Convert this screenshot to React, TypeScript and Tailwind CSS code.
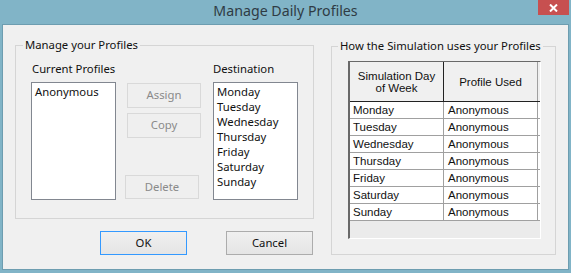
import React from 'react';

const days = ['Monday', 'Tuesday', 'Wednesday', 'Thursday', 'Friday', 'Saturday', 'Sunday'];

const ui = { fontFamily: '"Segoe UI", "Noto Sans", sans-serif' };
const grid = { fontFamily: 'Tahoma, "Liberation Sans", sans-serif' };

function DisabledButton({ label, className }: { label: string; className: string }) {
  return (
    <div
      className={`flex items-center justify-center w-[74px] border border-[#d9d9d9] bg-[#efefef] text-[11.3px] text-[#8a8a8a] ${className}`}
    >
      {label}
    </div>
  );
}

export default function App() {
  return (
    <div className="w-[571px] h-[273px] bg-[#81b4c7] flex flex-col text-[#111] whitespace-nowrap" style={ui}>
      {/* title bar */}
      <div className="relative h-[24px] flex items-center justify-center">
        <span className="text-[14.2px] text-[#2f3b44] leading-[20px] -mt-[2px]">Manage Daily Profiles</span>
        <div className="absolute right-[2px] top-0 w-[31px] h-[15px] bg-[#c75050] flex items-center justify-center">
          <svg width="9" height="8" viewBox="0 0 9 8">
            <path d="M1 0.5 L8 7.5 M8 0.5 L1 7.5" stroke="#fff" strokeWidth="2" />
          </svg>
        </div>
      </div>

      {/* client area */}
      <div className="mx-[2px] mb-[3px] flex-1 border border-[#6d9db0] bg-[#f0f0f0] flex pl-[12px]">
        {/* left side */}
        <div className="w-[299px] flex flex-col pt-[20px]">
          <div className="relative h-[174px] border border-[#d5d5d5] flex pl-[15px] pt-[15px]">
            <span className="absolute left-[7px] -top-[9px] px-[2px] bg-[#f0f0f0] text-[11.3px] leading-[16px]">
              Manage your Profiles
            </span>

            <div className="w-[85px] flex flex-col">
              <div className="h-[16px] mb-[5px] text-[11.3px] leading-[16px] pl-[1px]">Current Profiles</div>
              <div className="h-[118px] border border-[#828790] bg-white px-[3px] pt-[1px] text-[11.3px] leading-[15px]">
                Anonymous
              </div>
            </div>

            <div className="ml-[11px] w-[74px] flex flex-col pt-[22px]">
              <DisabledButton label="Assign" className="h-[25px]" />
              <DisabledButton label="Copy" className="h-[25px] mt-[5px]" />
              <DisabledButton label="Delete" className="h-[24px] mt-[37px] -ml-[2px]" />
            </div>

            <div className="ml-[12px] w-[85px] flex flex-col">
              <div className="h-[16px] mb-[5px] text-[11.3px] leading-[16px]">Destination</div>
              <div className="h-[118px] border border-[#828790] bg-white px-[3px] pt-[1px] text-[11.3px] leading-[15px]">
                {days.map((d) => (
                  <div key={d}>{d}</div>
                ))}
              </div>
            </div>
          </div>

          <div className="flex mt-[12px] pl-[85px]">
            <button className="w-[87px] h-[24px] border border-[#3399ff] bg-gradient-to-b from-[#f0f0f0] to-[#e5e5e5] text-[11.3px]">
              OK
            </button>
            <button className="ml-[39px] w-[87px] h-[24px] border border-[#acacac] bg-gradient-to-b from-[#f0f0f0] to-[#e5e5e5] text-[11.3px]">
              Cancel
            </button>
          </div>
        </div>

        {/* right side */}
        <div className="ml-[17px] pt-[21px]">
          <div className="relative w-[225px] h-[209px] border border-[#d5d5d5] pl-[16px] pt-[14px]">
            <span className="absolute left-[6px] -top-[9px] px-[2px] bg-[#f0f0f0] text-[11.3px] leading-[16px]">
              How the Simulation uses your Profiles
            </span>

            <div
              className="w-[193px] h-[178px] bg-[#ebebeb] border-l-2 border-t border-l-[#696969] border-t-[#696969] border-r border-b border-r-white border-b-white"
              style={grid}
            >
              <div className="flex h-[40px] border-b border-[#222] bg-[#f0f0f0] text-[11.5px] leading-[12px]">
                <div className="w-[94px] border-r border-[#222] flex items-center justify-center text-center">
                  Simulation Day
                  <br />
                  of Week
                </div>
                <div className="w-[94px] border-r border-[#a0a0a0] flex items-center justify-center">
                  Profile Used
                </div>
              </div>
              {days.map((d) => (
                <div key={d} className="flex h-[17px] border-b border-[#a0a0a0] bg-white text-[11.5px] leading-[16px]">
                  <div className="w-[94px] border-r border-[#a0a0a0] pl-[3px]">{d}</div>
                  <div className="w-[94px] border-r border-[#a0a0a0] pl-[4px]">Anonymous</div>
                </div>
              ))}
            </div>
          </div>
        </div>
      </div>
    </div>
  );
}
